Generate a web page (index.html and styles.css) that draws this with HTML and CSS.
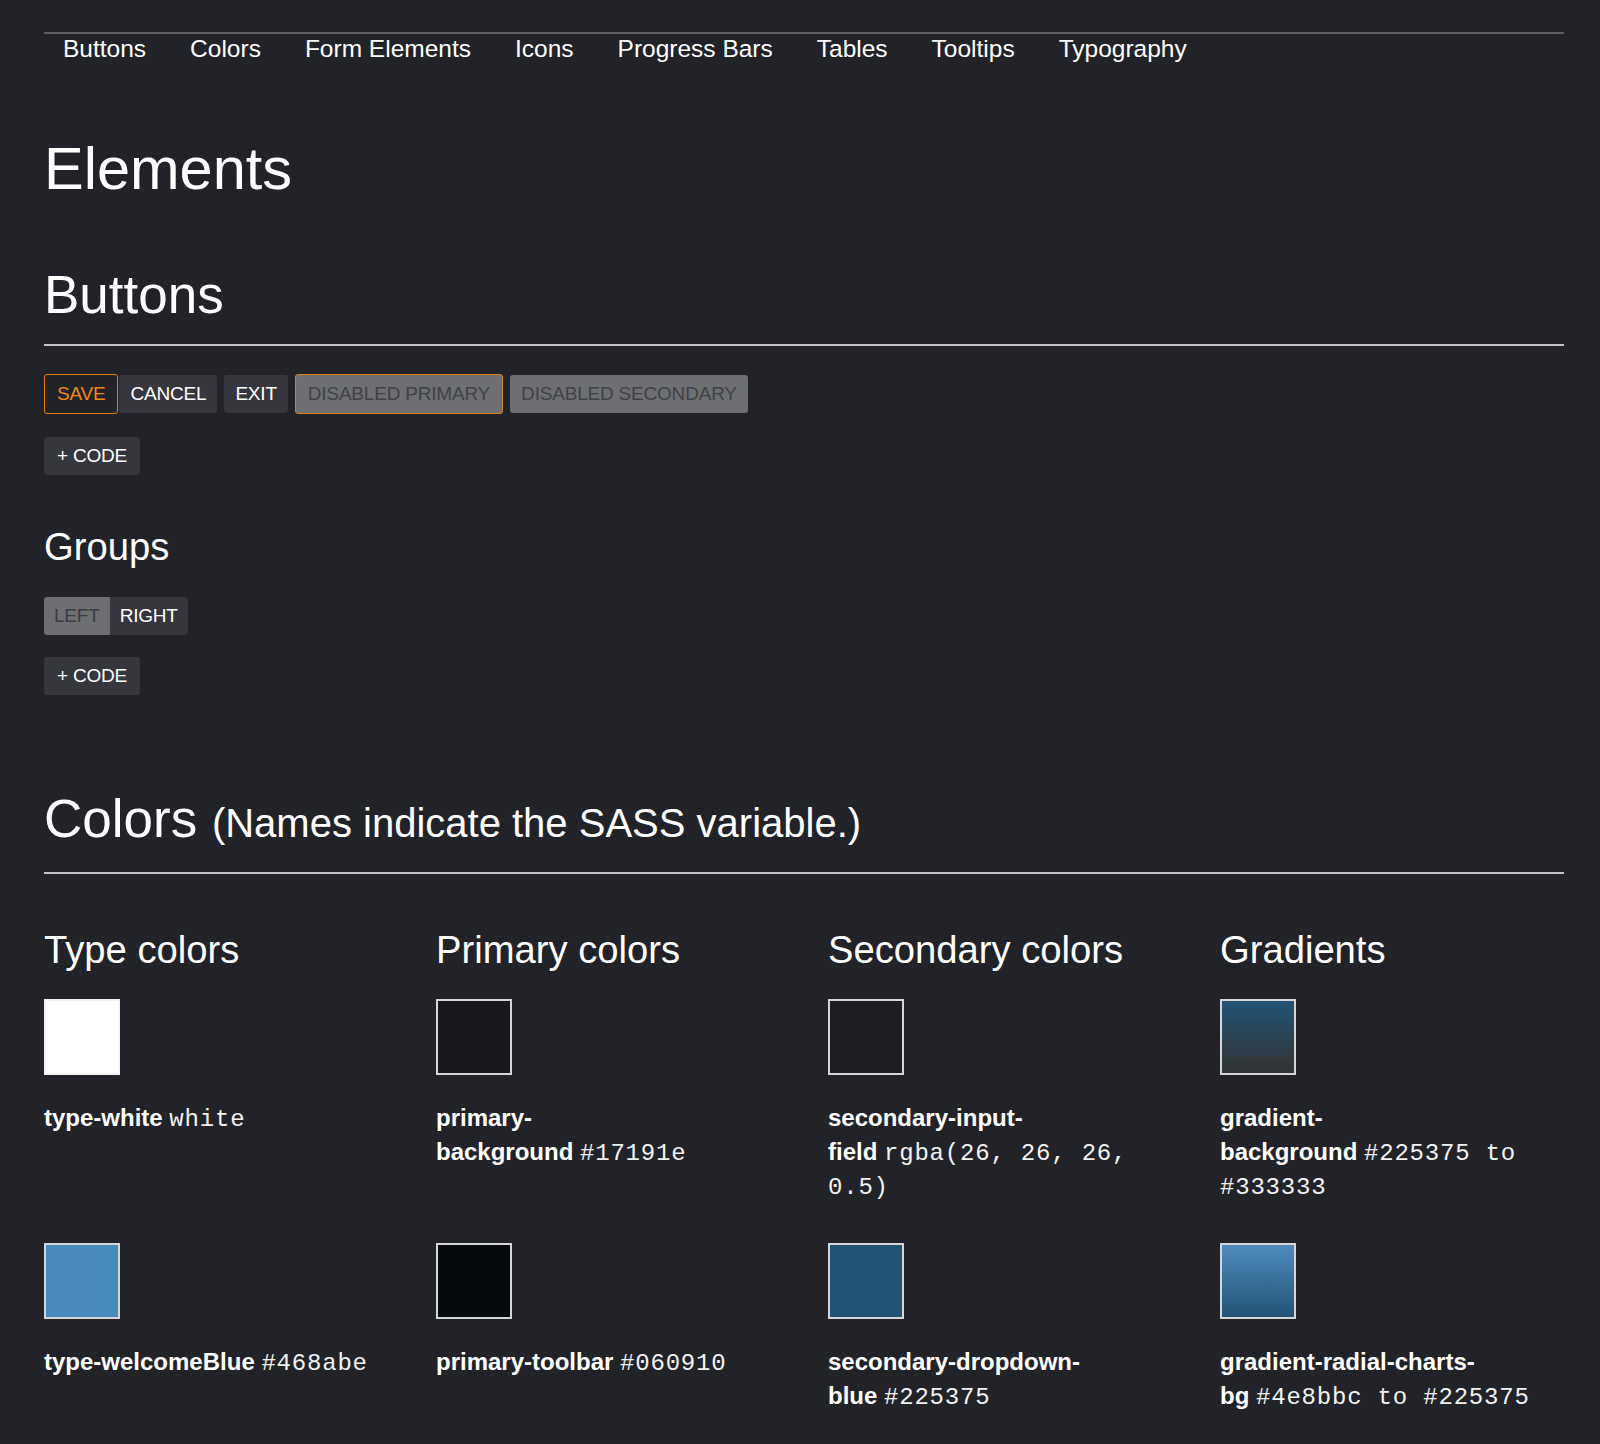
FILE: index.html
```html
<!DOCTYPE html>
<html lang="en">
<head>
<meta charset="utf-8">
<title>Elements</title>
<link rel="stylesheet" href="styles.css">
</head>
<body>
<div class="page">
  <nav class="nav">
    <a class="nav-link" href="#buttons">Buttons</a>
    <a class="nav-link" href="#colors">Colors</a>
    <a class="nav-link" href="#form">Form Elements</a>
    <a class="nav-link" href="#icons">Icons</a>
    <a class="nav-link" href="#progress">Progress Bars</a>
    <a class="nav-link" href="#tables">Tables</a>
    <a class="nav-link" href="#tooltips">Tooltips</a>
    <a class="nav-link" href="#typography">Typography</a>
  </nav>

  <h1 class="title">Elements</h1>

  <section class="section" id="buttons">
    <h2 class="section-title">Buttons</h2>
    <div class="rule"></div>
    <div class="btn-row">
      <button class="btn btn-primary">SAVE</button>
      <button class="btn btn-secondary btn-joined">CANCEL</button>
      <button class="btn btn-secondary">EXIT</button>
      <button class="btn btn-primary-disabled">DISABLED PRIMARY</button>
      <button class="btn btn-secondary-disabled">DISABLED SECONDARY</button>
    </div>
    <button class="btn btn-secondary btn-code">+ CODE</button>

    <h3 class="sub-title">Groups</h3>
    <div class="btn-group">
      <button class="btn btn-group-item btn-group-active">LEFT</button>
      <button class="btn btn-group-item">RIGHT</button>
    </div>
    <button class="btn btn-secondary btn-code btn-code-last">+ CODE</button>
  </section>

  <section class="section" id="colors">
    <h2 class="section-title section-title-colors">Colors <small class="section-note">(Names indicate the SASS variable.)</small></h2>
    <div class="rule rule-colors"></div>

    <div class="color-grid">
      <h3 class="col-title">Type colors</h3>
      <h3 class="col-title">Primary colors</h3>
      <h3 class="col-title">Secondary colors</h3>
      <h3 class="col-title">Gradients</h3>

      <div class="color-item">
        <div class="swatch swatch-white"></div>
        <p class="color-label"><strong>type-white</strong>&nbsp;<code class="color-value">white</code></p>
      </div>
      <div class="color-item">
        <div class="swatch swatch-primary-bg"></div>
        <p class="color-label"><strong>primary-background</strong>&nbsp;<code class="color-value">#17191e</code></p>
      </div>
      <div class="color-item">
        <div class="swatch swatch-input"></div>
        <p class="color-label"><strong>secondary-input-field</strong>&nbsp;<code class="color-value">rgba(26, 26, 26, 0.5)</code></p>
      </div>
      <div class="color-item">
        <div class="swatch swatch-grad-bg"></div>
        <p class="color-label"><strong>gradient-background</strong>&nbsp;<code class="color-value">#225375 to #333333</code></p>
      </div>

      <div class="color-item">
        <div class="swatch swatch-blue"></div>
        <p class="color-label"><strong>type-welcomeBlue</strong>&nbsp;<code class="color-value">#468abe</code></p>
      </div>
      <div class="color-item">
        <div class="swatch swatch-toolbar"></div>
        <p class="color-label"><strong>primary-toolbar</strong>&nbsp;<code class="color-value">#060910</code></p>
      </div>
      <div class="color-item">
        <div class="swatch swatch-dropdown"></div>
        <p class="color-label"><strong>secondary-dropdown-blue</strong>&nbsp;<code class="color-value">#225375</code></p>
      </div>
      <div class="color-item">
        <div class="swatch swatch-radial"></div>
        <p class="color-label"><strong>gradient-radial-charts-bg</strong>&nbsp;<code class="color-value">#4e8bbc to #225375</code></p>
      </div>
    </div>
  </section>
</div>
</body>
</html>
```

FILE: styles.css
```css
* {
  box-sizing: border-box;
}

html,
body {
  margin: 0;
  padding: 0;
  background: #212329;
}

body {
  min-height: 1444px;
  color: #ffffff;
  font-family: "Liberation Sans", Arial, Helvetica, sans-serif;
}

.page {
  width: 1520px;
  margin-left: 44px;
  padding-top: 32px;
  padding-bottom: 1px;
}

/* Navigation */
.nav {
  display: flex;
  gap: 44px;
  padding-left: 19px;
  border-top: 2px solid #5d5f64;
}

.nav-link {
  font-size: 24.5px;
  line-height: 30px;
  color: #ffffff;
  text-decoration: none;
}

/* Headings */
.title {
  margin: 73px 0 0;
  font-size: 59.5px;
  line-height: 64px;
  font-weight: 400;
}

.section-title {
  margin: 66px 0 0;
  font-size: 53px;
  line-height: 56px;
  font-weight: 400;
}

.section-title-colors {
  margin-top: 96px;
}

.section-note {
  font-size: 40px;
  line-height: 1;
}

.rule {
  height: 2px;
  margin-top: 21px;
  background: #c4c4c6;
}

.rule-colors {
  margin-top: 25px;
}

.sub-title {
  margin: 50px 0 0;
  font-size: 38.2px;
  line-height: 44px;
  font-weight: 400;
}

/* Buttons */
.btn {
  display: inline-flex;
  align-items: center;
  height: 38px;
  padding: 0 11px;
  border: 0;
  border-radius: 3px;
  font-family: "Liberation Sans", Arial, Helvetica, sans-serif;
  font-size: 19px;
  letter-spacing: -0.2px;
  cursor: pointer;
}

.btn-row {
  display: flex;
  align-items: center;
  gap: 7px;
  margin-top: 28px;
  height: 40px;
}

.btn-primary {
  height: 40px;
  padding: 0 12px;
  border: 1px solid #e0800f;
  background: transparent;
  color: #ee8a12;
}

.btn-secondary {
  background: #35363e;
  color: #ffffff;
}

.btn-joined {
  margin-left: -6px;
}

.btn-primary-disabled {
  height: 40px;
  padding: 0 12px;
  border: 1px solid #d9801c;
  background: #6e6f73;
  color: #404146;
}

.btn-secondary-disabled {
  background: #6e6f73;
  color: #404146;
  padding: 0 11px;
}

.btn-code {
  display: flex;
  margin-top: 23px;
  width: 96px;
  justify-content: center;
  padding: 0;
}

.btn-code-last {
  margin-top: 22px;
}

.btn-group {
  display: flex;
  margin-top: 28px;
}

.btn-group-item {
  border-radius: 0;
  background: #35363e;
  color: #ffffff;
  padding: 0 10px;
}

.btn-group-item:first-child {
  border-radius: 3px 0 0 3px;
}

.btn-group-item:last-child {
  border-radius: 0 3px 3px 0;
  padding: 0 10px;
}

.btn-group-active {
  background: #6e6f73;
  color: #3a3b40;
}

/* Colors */
.color-grid {
  display: grid;
  grid-template-columns: repeat(4, 344px);
  column-gap: 48px;
  margin-top: 54px;
}

.col-title {
  margin: 0 0 27px;
  font-size: 38.2px;
  line-height: 44px;
  font-weight: 400;
}

.color-item {
  padding-bottom: 40px;
  padding-right: 6px;
}

.swatch {
  width: 76px;
  height: 76px;
  border: 2px solid #d6d6d8;
}

.swatch-white {
  background: #ffffff;
  border-color: #f2f2f2;
}

.swatch-primary-bg {
  background: #17191e;
}

.swatch-input {
  background: rgba(26, 26, 26, 0.5);
}

.swatch-grad-bg {
  background: linear-gradient(to bottom, #225375, #333333);
}

.swatch-blue {
  background: #468abe;
}

.swatch-toolbar {
  background: #060910;
}

.swatch-dropdown {
  background: #225375;
}

.swatch-radial {
  background: linear-gradient(to bottom, #4e8bbc, #225375);
}

.color-label {
  margin: 26px 0 0;
  font-size: 24px;
  line-height: 34px;
  color: #ffffff;
}

.color-label strong {
  font-weight: 700;
}

.color-value {
  font-family: "Liberation Mono", "Courier New", monospace;
  font-size: 24px;
  line-height: 1;
  letter-spacing: 0.8px;
  color: #f2f2f2;
}
```
